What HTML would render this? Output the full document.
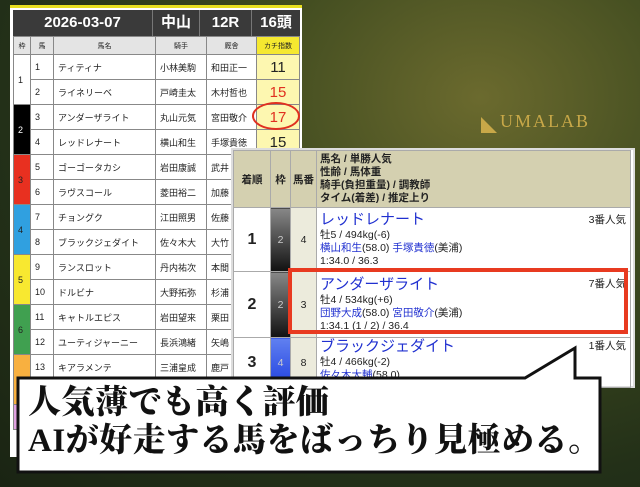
<!DOCTYPE html>
<html><head><meta charset="utf-8"><style>
*{margin:0;padding:0;box-sizing:border-box}
body{width:640px;height:487px;overflow:hidden;position:relative;font-family:"Liberation Sans","Noto Sans CJK JP",sans-serif;
background:radial-gradient(ellipse at 75% 20%,#6b6a2e 0%,#3e4a1f 35%,#233018 70%,#1a2413 100%)}
.a{position:absolute}
#lt{left:10px;top:5px;width:292px;height:452px;background:#fff;border-top:3px solid #e8e020;}
table{border-collapse:collapse}
#hd{left:13px;top:10px;width:287px;height:26px;background:#3a3a3a;color:#fff;font-weight:bold;font-size:15px;display:flex}
#hd div{border-right:1px solid #777;text-align:center;line-height:26px}
.lt td{border:1px solid #888;font-size:9px;height:25px;padding-left:4px;color:#222}
.lt .h td{height:18px;background:#e4e4e4;font-size:7px;text-align:center;padding:0}
.lt td.k{background:#fdf7b0;text-align:center;font-size:15px;padding:0}
.rt{font-size:10.5px;color:#222}
.rt td{border:1px solid #aaa}
.rt .hh td{background:#d4d0b0;font-weight:bold;font-size:10.5px;text-align:center}
.bl{color:#2030d0}
</style></head><body>
<div id="lt" class="a"></div>
<div id="hd" class="a"><div style="width:140px">2026-03-07</div><div style="width:47px">中山</div><div style="width:52px">12R</div><div style="width:48px;border:0">16頭</div></div>
<table class="a lt" style="left:13px;top:36px;width:287px">
<tr class="h"><td style="width:17px">枠</td><td style="width:23px">馬</td><td style="width:102px">馬名</td><td style="width:51px">騎手</td><td style="width:50px">厩舎</td><td style="background:#f5e830">カチ指数</td></tr>
<tr><td rowspan=2 style="background:#fff">1</td><td>1</td><td>ティティナ</td><td>小林美駒</td><td>和田正一</td><td class="k">11</td></tr>
<tr><td>2</td><td>ライネリーベ</td><td>戸崎圭太</td><td>木村哲也</td><td class="k" style="color:#e03020">15</td></tr>
<tr><td rowspan=2 style="background:#000;color:#fff">2</td><td>3</td><td>アンダーザライト</td><td>丸山元気</td><td>宮田敬介</td><td class="k" style="color:#e03020">17</td></tr>
<tr><td>4</td><td>レッドレナート</td><td>横山和生</td><td>手塚貴徳</td><td class="k">15</td></tr>
<tr><td rowspan=2 style="background:#e83020">3</td><td>5</td><td>ゴーゴータカシ</td><td>岩田康誠</td><td>武井</td><td></td></tr>
<tr><td>6</td><td>ラヴスコール</td><td>菱田裕二</td><td>加藤</td><td></td></tr>
<tr><td rowspan=2 style="background:#30a0e0">4</td><td>7</td><td>チョングク</td><td>江田照男</td><td>佐藤</td><td></td></tr>
<tr><td>8</td><td>ブラックジェダイト</td><td>佐々木大</td><td>大竹</td><td></td></tr>
<tr><td rowspan=2 style="background:#f8e830">5</td><td>9</td><td>ランスロット</td><td>丹内祐次</td><td>本間</td><td></td></tr>
<tr><td>10</td><td>ドルビナ</td><td>大野拓弥</td><td>杉浦</td><td></td></tr>
<tr><td rowspan=2 style="background:#40a050">6</td><td>11</td><td>キャトルエピス</td><td>岩田望来</td><td>栗田</td><td></td></tr>
<tr><td>12</td><td>ユーティジャーニー</td><td>長浜鴻緒</td><td>矢嶋</td><td></td></tr>
<tr><td rowspan=2 style="background:#f8b040">7</td><td>13</td><td>キアラメンテ</td><td>三浦皇成</td><td>鹿戸</td><td></td></tr>
<tr><td>14</td><td></td><td></td><td></td><td></td></tr>
<tr><td style="background:#e0a0e0"></td><td></td><td></td><td></td><td></td><td></td></tr>
</table>
<div class="a" style="left:252px;top:102px;width:48px;height:28px;border:2.5px solid #e03020;border-radius:50%"></div>
<div class="a" style="left:481px;top:112px;color:#c8a848;font-size:16px;">◣</div>
<div class="a" style="left:500px;top:111px;color:#c8a848;font-family:'Liberation Serif',serif;font-size:18px;letter-spacing:2px">UMALAB</div>
<div class="a" style="left:231px;top:148px;width:404px;height:240px;background:#fff;border:2px solid #ddd"></div>
<table class="a rt" style="left:233px;top:150px;width:398px">
<tr class="hh"><td style="width:37px;height:57px">着順</td><td style="width:20px">枠</td><td style="width:26px">馬番</td><td style="text-align:left;padding-left:3px;line-height:13px">馬名 / 単勝人気<br>性齢 / 馬体重<br>騎手(負担重量) / 調教師<br>タイム(着差) / 推定上り</td></tr>
<tr><td style="height:64px;text-align:center;font-weight:bold;font-size:16px">1</td><td style="background:linear-gradient(#888,#111);color:#ccc;text-align:center">2</td><td style="background:#ecebdc;text-align:center">4</td><td style="padding-left:3px;line-height:13px;position:relative"><span class="bl" style="font-size:15px;line-height:18px">レッドレナート</span><span style="position:absolute;right:4px;top:6px">3番人気</span><br>牡5 / 494kg(-6)<br><span class="bl">横山和生</span>(58.0) <span class="bl">手塚貴徳</span>(美浦)<br>1:34.0 / 36.3</td></tr>
<tr><td style="height:66px;text-align:center;font-weight:bold;font-size:16px">2</td><td style="background:linear-gradient(#888,#111);color:#ccc;text-align:center">2</td><td style="background:#ecebdc;text-align:center">3</td><td style="padding-left:3px;line-height:13px;position:relative"><span class="bl" style="font-size:15px;line-height:18px">アンダーザライト</span><span style="position:absolute;right:4px;top:6px">7番人気</span><br>牡4 / 534kg(+6)<br><span class="bl">団野大成</span>(58.0) <span class="bl">宮田敬介</span>(美浦)<br>1:34.1 (1 / 2) / 36.4</td></tr>
<tr><td style="height:50px;text-align:center;font-weight:bold;font-size:16px">3</td><td style="background:linear-gradient(#6080f0,#2040e0);color:#ccc;text-align:center">4</td><td style="background:#ecebdc;text-align:center">8</td><td style="padding-left:3px;line-height:13px;vertical-align:top;position:relative"><span class="bl" style="font-size:15px;line-height:18px">ブラックジェダイト</span><span style="position:absolute;right:4px;top:2px">1番人気</span><br>牡4 / 466kg(-2)<br><span class="bl">佐々木大輔</span>(58.0)</td></tr>
</table>
<div class="a" style="left:288px;top:268px;width:340px;height:66px;border:4px solid #e83a20"></div>
<svg class="a" style="left:0;top:0" width="640" height="487"><polygon points="18,378 525,378 575,348 575,378 600,378 600,472 18,472" fill="#fff" stroke="#111" stroke-width="3"/></svg>
<div class="a" style="left:28px;top:384px;font-family:'Liberation Serif','Noto Serif CJK SC',serif;font-weight:900;font-size:33px;line-height:38px;color:#111;white-space:nowrap;letter-spacing:0.5px">人気薄でも高く評価<br><span style="letter-spacing:0.5px">AIが好走する馬をばっちり見極める。</span></div>
</body></html>
